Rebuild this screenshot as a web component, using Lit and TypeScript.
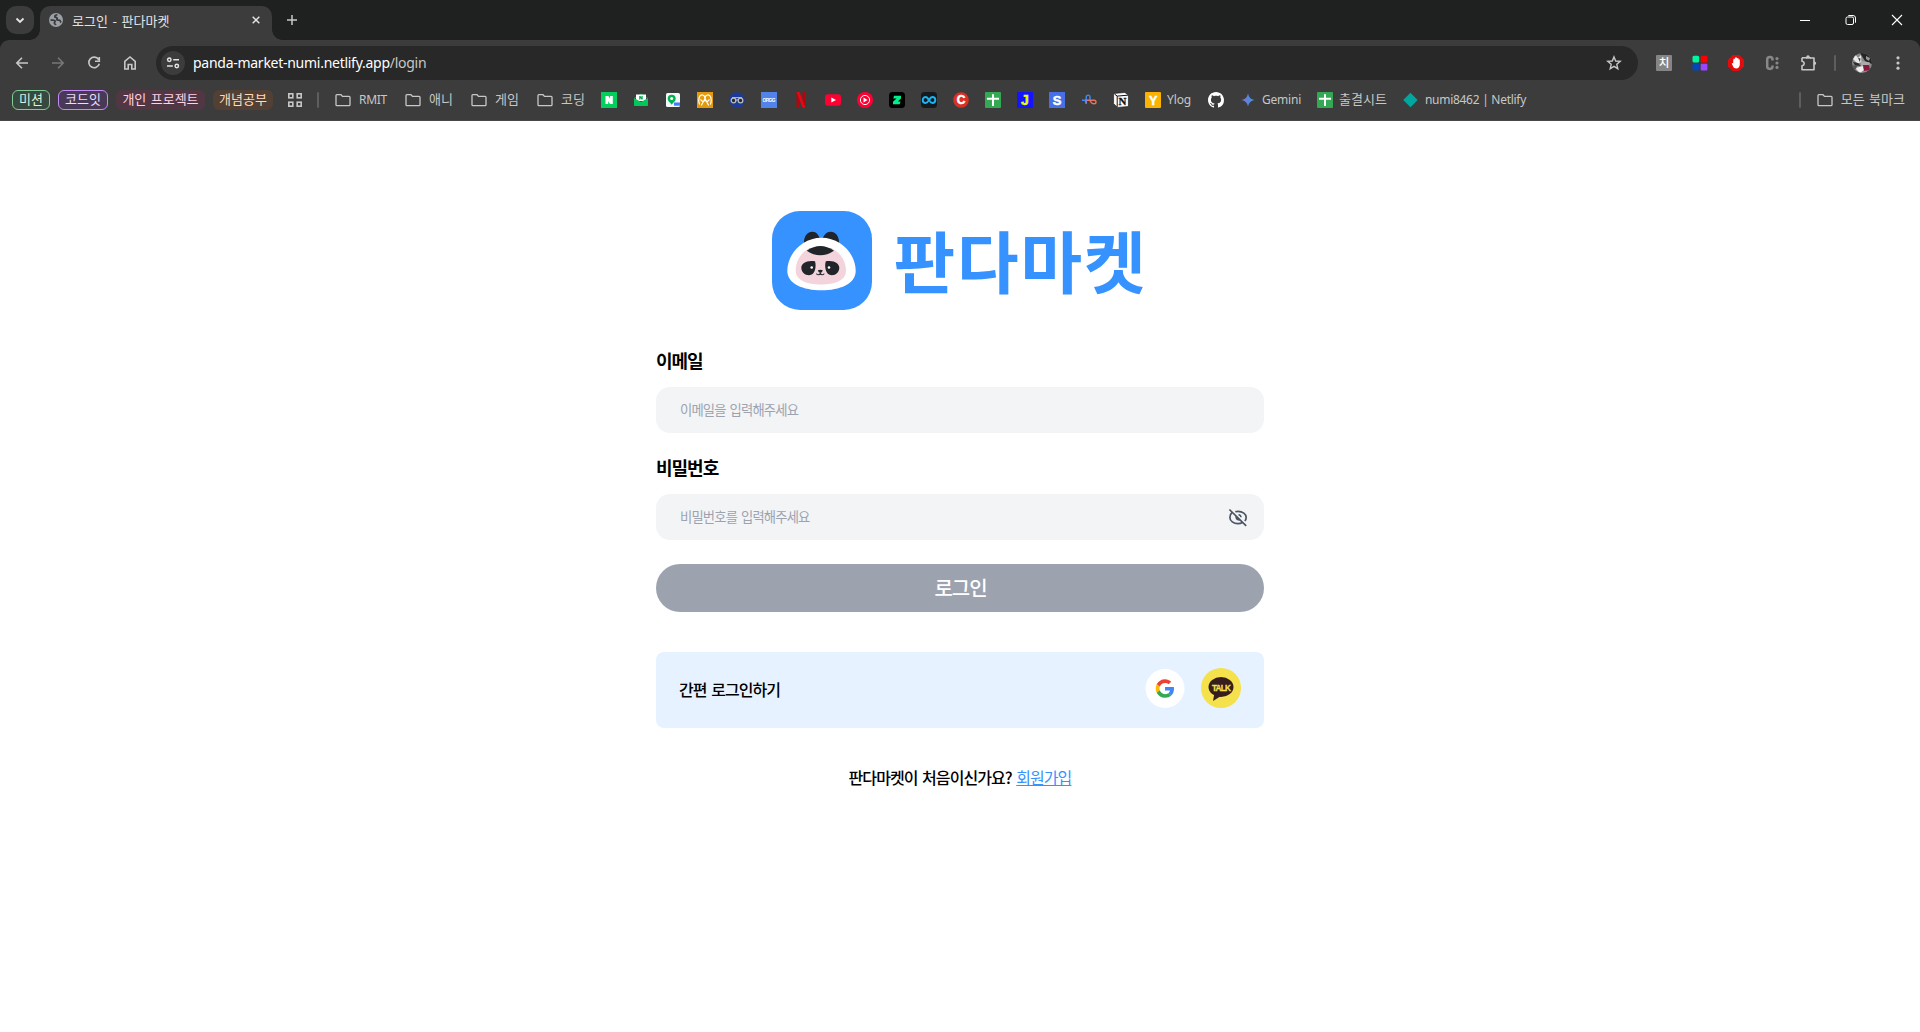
import { LitElement, html, css, svg, nothing } from "lit";
import { customElement, property } from "lit/decorators.js";
import { styleMap } from "lit/directives/style-map.js";

const icon = (size: number, body: unknown, box = "0 0 16 16") =>
  html`<svg width=${size} height=${size} viewBox=${box} fill="none" style="display:block">${body}</svg>`;

const glyph = (t: string, fill: string, size: number, y: number) =>
  svg`<text x="8" y=${y} text-anchor="middle" font-family="Liberation Sans, sans-serif" font-weight="700" font-size=${size} fill=${fill} stroke=${fill} stroke-width=".5">${t}</text>`;

const folder = svg`<path d="M1.9 2.7H6l1.5 1.7h6.6c.5 0 .9.4.9.9v7.4c0 .5-.4.9-.9.9H1.9c-.5 0-.9-.4-.9-.9V3.6c0-.5.4-.9.9-.9z" stroke="#c7c7c7" stroke-width="1.3"/>`;

const sheet = svg`<rect width="16" height="16" rx="1" fill="#34a853"/><path d="M7 2.3h2v3.500h5v2H9v6.200H7V7.800H2v-2h5z" fill="#fff"/>`;

interface Mark {
  art: unknown;
  label?: string;
  width: number;
  gap?: number;
  spacing?: string;
}

const marks: Mark[] = [
  { art: folder, label: "RMIT", width: 70, gap: 8, spacing: "-0.3px" },
  { art: folder, label: "애니", width: 66, gap: 8 },
  { art: folder, label: "게임", width: 66, gap: 8 },
  { art: folder, label: "코딩", width: 64, gap: 8 },
  { width: 32, art: svg`<rect width="16" height="16" fill="#03cf5d"/><path d="M4.500 4h2.900l1.700 2.700V4h2.700v8H9L7.200 9.200V12H4.500z" fill="#fff"/>` },
  { width: 32, art: svg`<path d="M1 6l7-4.500L15 6z" fill="#03a94d"/><path d="M3 2.500h10V9H3z" fill="#fff"/><path d="M6.200 4h1.300l1 1.500V4h1.200v3.500H8.400l-1-1.400v1.400H6.200z" fill="#03a94d"/><path d="M1 6l7 4 7-4v7.200c0 .5-.4.8-.8.8H1.800c-.4 0-.8-.3-.8-.8z" fill="#03c75a"/>` },
  { width: 32, art: svg`<rect x="1" y="1" width="14" height="14" rx="1.500" fill="#f4f6f8"/><path d="M9 10.500h6v3.200H9z" fill="#3d7dff"/><path d="M6.700 2.700a4 4 0 0 1 4 4c0 2.500-2.300 3.500-4 6-1.700-2.500-4-3.500-4-6a4 4 0 0 1 4-4z" fill="#03b350"/><circle cx="6.700" cy="6.500" r="1.500" fill="#fff"/>` },
  { width: 32, art: svg`<rect width="16" height="16" fill="#e39a0b"/><path d="M2.600 12.500C.500 7 2.500 2.600 5.500 3c2 .3 2.500 2 2.500 3.500C8 5 8.500 3.300 10.500 3c3-.4 5 4 2.900 9.500M4.300 13.500L8 6.500l3.700 7M3.500 7.500l2.700 2.600M12.500 7.500l-2.700 2.600M8 6.500v3" stroke="#fff" stroke-width="1.200"/>` },
  { width: 32, art: svg`<circle cx="8" cy="8" r="7.800" fill="#1d3a98"/><circle cx="4.500" cy="8.500" r="2.300" fill="#222831" stroke="#b9bcb9" stroke-width="1.300"/><circle cx="11.500" cy="8.500" r="2.300" fill="#222831" stroke="#b9bcb9" stroke-width="1.300"/><path d="M3 5.600h10M7 8h2" stroke="#b9bcb9"/>` },
  { width: 32, art: svg`<rect width="16" height="16" fill="#5383e8"/><text x="8" y="9.800" text-anchor="middle" textLength="13" font-family="Liberation Sans, sans-serif" font-weight="700" font-size="4.800" fill="#fff">OP.GG</text>` },
  { width: 32, art: svg`<path d="M3.500 0h3v16l-3 .200zM9.500 0h3v16l-3-.500z" fill="#b1060f"/><path d="M3.500 0h3l6 16-3-.400z" fill="#e50914"/>` },
  { width: 32, art: svg`<rect y="2.200" width="16" height="11.600" rx="3" fill="#ff0033"/><path d="M6.300 5.400L11 8l-4.700 2.600z" fill="#fff"/>` },
  { width: 32, art: svg`<circle cx="8" cy="8" r="8" fill="#ff0033"/><circle cx="8" cy="8" r="4.600" stroke="#fff" stroke-width="1"/><path d="M6.500 5.600L10.500 8l-4 2.400z" fill="#fff"/>` },
  { width: 32, art: svg`<rect width="16" height="16" rx="3.500" fill="#000"/><path d="M5 3.800h7v2.700L8.800 9.500h2.700l-.8 2.700H4V9.700l3.600-3.300H4.300z" fill="#00ee8c"/>` },
  { width: 32, art: svg`<rect width="16" height="16" rx="3.500" fill="#16191d"/><path d="M8 8C6.500 5.500 5.800 5 4.700 5a3 3 0 0 0 0 6C5.800 11 6.500 10.500 8 8s2.200-3 3.300-3a3 3 0 0 1 0 6C10.200 11 9.500 10.500 8 8z" stroke="#19b5f4" stroke-width="1.900"/>` },
  { width: 32, art: svg`<circle cx="8" cy="8" r="7.800" fill="#d93025"/>${glyph("C", "#fff", 12, 12.3)}` },
  { width: 32, art: sheet },
  { width: 32, art: svg`<rect width="16" height="16" fill="#1414ff"/>${glyph("J", "#e1ff00", 14, 13)}` },
  { width: 32, art: svg`<rect width="16" height="16" fill="#4770e8"/>${glyph("S", "#fff", 13, 12.600)}` },
  { width: 32, art: svg`<path d="M1 8.200h2.200c1.500 0 2 3 2 3.600V5a1.900 1.900 0 0 1 3.800 0v3.500" stroke="#3f8cf0" stroke-width="1.400"/><path d="M4.500 8.200h8.700a1.700 1.700 0 0 1 0 3.600c-3.200 0-3.200-1.500-4.200-3.600" stroke="#e8735a" stroke-width="1.400"/><path d="M5.200 11.800V7.500" stroke="#8a7fe0" stroke-width="1.400"/>` },
  { width: 32, art: svg`<path d="M.6 1.500L11.800.5 15.400 3v11.500l-11 .9L.6 11.500z" fill="#fff" stroke="#111" stroke-width=".6"/><path d="M1.500 2L4.200 4.100l10.700-.9M4.200 4.100v10.800" stroke="#111" stroke-width="1"/><text x="9.600" y="12.800" text-anchor="middle" font-family="Liberation Serif, serif" font-weight="700" font-size="11" fill="#111" stroke="#111" stroke-width=".3">N</text>` },
  { width: 63, label: "Ylog", spacing: "-0.1px", art: svg`<rect width="16" height="16" rx="1" fill="#f9b300"/>${glyph("Y", "#fff", 12.500, 12.500)}` },
  { width: 32, art: svg`<path fill="#fff" d="M8 0C3.580 0 0 3.580 0 8c0 3.540 2.290 6.530 5.470 7.590.4.070.55-.17.55-.38 0-.19-.01-.82-.01-1.490-2.010.37-2.530-.49-2.690-.94-.09-.23-.48-.94-.82-1.130-.28-.15-.68-.52-.01-.53.63-.01 1.080.58 1.230.82.720 1.210 1.870.87 2.330.66.070-.52.280-.87.510-1.070-1.780-.2-3.640-.89-3.640-3.950 0-.87.310-1.590.82-2.150-.08-.2-.36-1.020.08-2.120 0 0 .67-.21 2.200.82.640-.18 1.320-.27 2-.27s1.360.09 2 .27c1.530-1.040 2.200-.82 2.200-.82.440 1.100.160 1.920.080 2.120.510.56.820 1.270.820 2.150 0 3.070-1.870 3.750-3.650 3.950.290.250.540.730.540 1.480 0 1.070-.01 1.930-.01 2.200 0 .210.150.460.550.380A8.010 8.010 0 0 0 16 8c0-4.420-3.580-8-8-8z"/>` },
  { width: 77, label: "Gemini", spacing: "-0.2px", art: svg`<defs><linearGradient id="gem" x1="2" y1="8" x2="14" y2="8" gradientUnits="userSpaceOnUse"><stop stop-color="#8e72c4"/><stop offset=".45" stop-color="#5c83dd"/><stop offset="1" stop-color="#3f97ea"/></linearGradient></defs><path d="M8 1.500Q9 7 14.500 8 9 9 8 14.500 7 9 1.500 8 7 7 8 1.500z" fill="url(#gem)"/>` },
  { width: 86, label: "출결시트", art: sheet },
  { width: 123, label: "numi8462 | Netlify", spacing: "-0.28px", gap: 7, art: svg`<path d="M8 .3L15.700 8 8 15.700.3 8z" fill="#00a6a0"/>` },
];

@customElement("browser-bar")
class BrowserBar extends LitElement {
  static styles = css`
    :host { display: block; height: 121px; background: #1f2120; color: #c7c7c7; box-sizing: border-box;
      font: 12px/16px "Noto Sans", "Noto Sans CJK KR", sans-serif; }
    .strip { display: flex; height: 40px; align-items: flex-start; padding-left: 6px; box-sizing: border-box; }
    .search { display: grid; place-items: center; width: 28px; height: 28px; margin: 6px 6px 0 0; border-radius: 10px; background: #3c3c3c; }
    .tab { position: relative; display: flex; align-items: center; width: 232px; height: 34px; margin-top: 6px; padding: 0 9px 6px; box-sizing: border-box; background: #3c3c3c; border-radius: 10px 10px 0 0; }
    .tab::before, .tab::after { content: ""; position: absolute; bottom: 0; width: 10px; height: 10px; }
    .tab::before { left: -10px; background: radial-gradient(circle at 0 0, transparent 9.5px, #3c3c3c 10px); }
    .tab::after { right: -10px; background: radial-gradient(circle at 100% 0, transparent 9.5px, #3c3c3c 10px); }
    .title { flex: 1; margin-left: 9px; padding-top: 1px; color: #e3e3e3; font: 13px/16px "Noto Sans CJK KR", sans-serif; letter-spacing: 0.1px; word-spacing: 1.3px; }
    .plus { display: grid; place-items: center; width: 28px; height: 28px; margin: 6px 0 0 6px; }
    .window { display: flex; margin-left: auto; height: 40px; }
    .window > span { display: grid; place-items: center; width: 46px; }
    .tools { display: flex; align-items: center; height: 46px; padding: 0 4px; background: #3c3c3c; border-radius: 9px 9px 0 0; }
    .cell { display: grid; place-items: center; width: 36px; height: 34px; }
    .omni { display: flex; align-items: center; flex: 1; height: 34px; margin: 0 8px; border-radius: 17px; background: #282828; padding: 0 16px 0 5px; }
    .site { display: grid; place-items: center; width: 24px; height: 24px; border-radius: 50%; background: #3c3c3c; }
    .url { flex: 1; margin-left: 8px; font-size: 14px; line-height: 20px; letter-spacing: -0.27px; color: #fff; }
    .url span { color: #c7c7c7; }
    .sep { width: 2px; height: 16px; background: #5e5e5e; border-radius: 1px; }
    .tools .sep { margin: 0 8px; }
    .marks { display: flex; align-items: center; height: 35px; padding: 0 15px 6px 12px; background: #3c3c3c; border-bottom: 1px solid #474747; box-sizing: border-box; white-space: nowrap; }
    .chip { box-sizing: border-box; height: 20px; margin-right: 8px; border: 1px solid; border-radius: 6px; text-align: center; font: 13px/16px "Noto Sans CJK KR", sans-serif; word-spacing: 1.5px; }
    .green { width: 38px; background: #37493f; border-color: #81c995; color: #d9f2df; }
    .purple { width: 50px; background: #483a56; border-color: #c58af9; color: #eddcff; }
    .pink { width: 89px; background: #513744; border-color: #513744; color: #ffd3e6; }
    .orange { width: 60px; background: #524034; border-color: #524034; color: #ffdcc0; }
    .apps { margin: 0 15px 0 7px; }
    .mark { display: flex; align-items: center; flex: none; font-family: "Noto Sans", sans-serif; }
    .ko { padding-bottom: 2px; font: 13px/16px "Noto Sans CJK KR", sans-serif; word-spacing: 1.5px; }
    .list { display: flex; flex: 1; margin-left: 16px; }
    .all { display: flex; align-items: center; gap: 8px; margin-left: 16px; }
  `;

  render() {
    return html`
      <div class="strip">
        <div class="search">${icon(16, svg`<path d="M4.500 6.500L8 10l3.500-3.500" stroke="#e3e3e3" stroke-width="1.900"/>`)}</div>
        <div class="tab">
          ${icon(14, svg`<circle cx="8" cy="8" r="8" fill="#9aa0a6"/><path d="M9.700 2c-2 .3-3.500 1.300-3 2.400.4.900 2.200.5 2.600 1.400.3.900-.7 1.300-.3 2.100.5.900 2.600-.3 3.500.6.700.700.2 1.600 1.500 2.200M1.800 7.800c2 .5 5-.2 5.200 1.400.2 1.400-1.300 1.300-.8 2.600.3.700 1.300.8 1.400 2" stroke="#3c3c3c" stroke-width="2"/>`)}
          <span class="title">로그인 - 판다마켓</span>
          ${icon(14, svg`<path d="M4.200 4.200l7.600 7.600M11.800 4.200l-7.600 7.600" stroke="#e3e3e3" stroke-width="1.700"/>`)}
        </div>
        <div class="plus">${icon(16, svg`<path d="M8 3v10M3 8h10" stroke="#c7c7c7" stroke-width="1.500"/>`)}</div>
        <div class="window">
          <span>${icon(12, svg`<path d="M1 6.500h10" stroke="#fff"/>`, "0 0 12 12")}</span>
          <span>${icon(12, svg`<rect x="1" y="3" width="7.500" height="7.500" rx="1.500" stroke="#fff"/><path d="M3.300 1.500h4.700a2.500 2.500 0 0 1 2.500 2.500v4.700" stroke="#fff"/>`, "0 0 12 12")}</span>
          <span>${icon(12, svg`<path d="M1 1l10 10M11 1L1 11" stroke="#fff" stroke-width="1.100"/>`, "0 0 12 12")}</span>
        </div>
      </div>
      <div class="tools">
        <div class="cell">${icon(16, svg`<path d="M14 8H3M8 2.800L2.800 8 8 13.200" stroke="#c7c7c7" stroke-width="1.600"/>`)}</div>
        <div class="cell">${icon(16, svg`<path d="M2 8h11M8 2.800L13.200 8 8 13.200" stroke="#777" stroke-width="1.600"/>`)}</div>
        <div class="cell">${icon(16, svg`<path d="M12.600 4.500A5.300 5.300 0 1 0 13.300 8.800M13.300 2v4.300H9" stroke="#c7c7c7" stroke-width="1.600"/>`)}</div>
        <div class="cell">${icon(16, svg`<path d="M2.800 6.300L8 2l5.200 4.300V14H9.800V9.500H6.200V14H2.800z" stroke="#c7c7c7" stroke-width="1.600"/>`)}</div>
        <div class="omni">
          <span class="site">${icon(16, svg`<g stroke="#e3e3e3" stroke-width="1.500"><circle cx="4.300" cy="4.800" r="1.700"/><path d="M8.200 4.800H14M2 11h5.800"/><circle cx="11.800" cy="11" r="1.700"/></g>`)}</span>
          <span class="url">panda-market-numi.netlify.app<span>/login</span></span>
          ${icon(16, svg`<path d="M8 1.900l1.700 4.100 4.500.4-3.400 2.900 1 4.400L8 11.300l-3.800 2.400 1-4.400L1.800 6.400l4.500-.4z" stroke="#c7c7c7" stroke-width="1.400"/>`)}
        </div>
        <div class="cell">${icon(16, svg`<rect width="16" height="16" rx="1" fill="#858585"/><text x="8" y="12.200" text-anchor="middle" font-family="Noto Sans CJK KR, sans-serif" font-size="11.500" font-weight="500" fill="#fff">치</text>`)}</div>
        <div class="cell">${icon(16, svg`<rect x=".5" y=".8" width="6.700" height="6.700" rx="1.500" fill="#00f5a0"/><rect x="8.700" y=".8" width="6.700" height="6.700" rx="1" fill="#ff0000"/><rect x=".5" y="8.700" width="6.700" height="6.700" rx="1" fill="#0546b8"/><rect x="8.700" y="8.700" width="6.700" height="6.700" rx="1" fill="#9747ff"/>`)}</div>
        <div class="cell">${icon(16, svg`<path d="M4.700 0h6.600L16 4.700v6.600L11.300 16H4.700L0 11.300V4.700z" fill="#e30b0b"/><path d="M5.200 5.200h.3V3.800h1.500v-1.300H9v.8h1.500v1.200h1.300v5c0 2-1.300 4-3.500 4-1.700 0-2.700-1-3.300-2.300L3.700 8.500l.8-.6.7.7z" fill="#fff"/>`)}</div>
        <div class="cell">${icon(16, svg`<path d="M8.500 5.400V4.400c0-1.500-.9-2.300-2.500-2.300S3.200 2.900 3.200 4.400v7.200c0 1.500 1.200 2.300 2.800 2.300s2.500-.8 2.500-2.300v-1" stroke="#888" stroke-width="2.500"/><g fill="#888"><circle cx="13" cy="3.600" r="1.600"/><circle cx="13" cy="8" r="1.600"/><circle cx="13" cy="12.400" r="1.600"/></g>`)}</div>
        <div class="cell">${icon(18, svg`<path d="M3 3.800h5M3 3.800v3.500c3 .7 3 3.900 0 4.600v3.900h12V4h-4" stroke="#c7c7c7" stroke-width="1.600" stroke-linejoin="round"/><path d="M7.200 4.200V3a1.800 1.800 0 0 1 3.600 0v1.200zM14.800 7.500h.6a1.700 1.700 0 0 1 0 3.500h-.6z" fill="#c7c7c7"/><path d="M7 3.800h5" stroke="#c7c7c7" stroke-width="1.600"/>`, "0 0 18 18")}</div>
        <i class="sep"></i>
        <div class="cell">${icon(20, svg`<clipPath id="av"><circle cx="10" cy="10" r="10"/></clipPath><g clip-path="url(#av)"><path d="M0 0h20v20H0z" fill="#8a8989"/><path d="M8 0h12v11L13 8z" fill="#252323"/><path d="M3 1l3 4 3-3 .500 7-4 1.500L1 6z" fill="#e8e8e8"/><path d="M6 5l2.500.5L8 9zM1 9l5 1 3 3-6-.5z" fill="#302c2d"/><path d="M9 8l9 1.500-1 2.500-8 1z" fill="#aaa"/><path d="M14 3l4 2-1 3-3-2z" fill="#999"/><path d="M3 15l8-2 1 4-4 3z" fill="#eee"/><path d="M0 12l5 1-1 3-3 1z" fill="#555"/><path d="M11 12h6l1 5-6 1z" fill="#8b183a"/></g>`, "0 0 20 20")}</div>
        <div class="cell">${icon(16, svg`<g fill="#c7c7c7"><circle cx="8" cy="2.800" r="1.600"/><circle cx="8" cy="8" r="1.600"/><circle cx="8" cy="13.200" r="1.600"/></g>`)}</div>
      </div>
      <div class="marks">
        <span class="chip green">미션</span>
        <span class="chip purple">코드잇</span>
        <span class="chip pink">개인 프로젝트</span>
        <span class="chip orange">개념공부</span>
        <span class="apps">${icon(14, svg`<g stroke="#c7c7c7" stroke-width="1.600"><rect x=".8" y=".8" width="4" height="4"/><rect x="9.200" y=".8" width="4" height="4"/><rect x=".8" y="9.200" width="4" height="4"/><rect x="9.200" y="9.200" width="4" height="4"/></g>`, "0 0 14 14")}</span>
        <i class="sep"></i>
        <div class="list">
          ${marks.map(
            (m) => html`<div class="mark" style=${styleMap({ width: `${m.width}px`, gap: `${m.gap ?? 6}px`, letterSpacing: m.spacing ?? "normal" })}>
              ${icon(16, m.art)}${m.label ? html`<span class=${/[가-힣]/.test(m.label) ? "ko" : ""}>${m.label}</span>` : nothing}
            </div>`,
          )}
        </div>
        <i class="sep"></i>
        <span class="all">${icon(16, folder)}<span class="ko">모든 북마크</span></span>
      </div>
    `;
  }
}

@customElement("form-field")
class FormField extends LitElement {
  @property() label = "";
  @property() hint = "";
  @property({ type: Boolean }) secret = false;

  static styles = css`
    :host { display: block; margin-bottom: 24px; font-family: "Noto Sans CJK KR", sans-serif; }
    label { display: block; height: 21px; margin-bottom: 16px; font-size: 18px; line-height: 21px; font-weight: 700; letter-spacing: -1px; }
    .box { display: flex; align-items: center; height: 46px; padding: 0 14px 0 24px; box-sizing: border-box; border-radius: 14px; background: #f3f4f6; }
    input { flex: 1; min-width: 0; height: 46px; padding: 0 0 2px; box-sizing: border-box; border: 0; outline: 0; background: transparent; font: 13.333px/16px "Noto Sans CJK KR", sans-serif; letter-spacing: -0.85px; word-spacing: 1.800px; }
    input::placeholder { color: #9ca3af; opacity: 1; }
  `;

  render() {
    return html`
      <label>${this.label}</label>
      <div class="box">
        <input type=${this.secret ? "password" : "email"} placeholder=${this.hint} />
        ${this.secret
          ? icon(24, svg`<g stroke="#4b5563" stroke-width="1.700"><path d="M3.400 4.500L20.200 20.800"/><path d="M6.100 7.500C4.500 8.800 3.900 10.700 3.900 12.500c0 3.500 3.700 6.200 8.100 6.200 1.600 0 3.200-.4 4.400-1.100M9.300 6.800c.8-.3 1.800-.4 2.700-.4 4.600 0 8.200 2.700 8.200 6.100 0 1.300-.5 2.500-1.400 3.500"/></g><path d="M9.600 10.200l5.200 5c-2.300 1.300-6.500-.3-5.200-5z" fill="#4b5563"/><path d="M12.500 9.700c1.500.2 2.400 1.200 2.500 2.600" stroke="#4b5563" stroke-width="1.500"/>`, "0 0 24 24")
          : nothing}
      </div>
    `;
  }
}

@customElement("app-root")
class AppRoot extends LitElement {
  static styles = css`
    :host { display: block; height: 1032px; overflow: hidden; background: #fff; color: #000; font-family: "Noto Sans CJK KR", sans-serif; }
    main { display: flex; flex-direction: column; width: 608px; margin: 0 auto; padding-top: 90px; }
    .logo { display: flex; align-items: center; gap: 22px; height: 100px; margin: 0 0 39px 115.500px; }
    h1 { margin: 0; padding-bottom: 5px; color: #3692ff; font-size: 67px; line-height: 95px; font-weight: 700; letter-spacing: 1.900px; white-space: nowrap; }
    .login { height: 48px; border: 0; border-radius: 24px; background: #9ca3af; color: #fff; font: 500 20px/48px "Noto Sans CJK KR", sans-serif; letter-spacing: -1px; padding: 0 0 0 1px; }
    .social { display: flex; align-items: center; gap: 16px; height: 76px; margin-top: 40px; padding: 0 23px 4px; box-sizing: border-box; border-radius: 8px; background: #e6f2ff; font-size: 16px; font-weight: 500; letter-spacing: -0.95px; word-spacing: 2px; }
    .social span { flex: 1; padding-top: 1px; }
    .join { margin: 37px 0 0; text-align: center; font-size: 16px; line-height: 24px; font-weight: 500; letter-spacing: -0.95px; word-spacing: 2px; }
    .join a { color: #3692ff; font-weight: 400; text-decoration: underline; }
  `;

  render() {
    return html`
      <browser-bar></browser-bar>
      <main>
        <div class="logo">
          ${icon(100, svg`<rect width="100" height="99" rx="28" fill="#3692ff"/>
            <path d="M32 32c-.5-7 4-11.500 8.500-11.300 4 .2 6 3 7 6.300zM67 32c.5-7-4-11.500-8.500-11.300-4 .2-6.500 3-7.500 6.300z" fill="#212529"/>
            <path d="M49.500 26.700C69 26.700 83.700 43 83.700 60c0 13-16 19.300-34.200 19.300S15.300 73 15.300 60c0-17 14.700-33.300 34.200-33.300z" fill="#fff"/>
            <path d="M37 37.500h23C69 42 74 51 74 59.500 74 69.500 63 73.500 49 73.500S23.700 69.500 23.700 59.500C23.700 51 28 42 37 37.500z" fill="#f3d4dc"/>
            <path d="M34.700 39.700Q48.300 30.500 62 39.700 48.300 48.900 34.700 39.700z" fill="#212529"/>
            <path d="M43 50.300c1.500 4.500.5 14-6 14-4.300 0-7.700-3.500-7.700-7.500 0-4.700 5.700-8 13.700-6.500zM53.800 50.300c-1.500 4.500-.5 14 6 14 4.300 0 7.500-3.500 7.500-7.500 0-4.700-5.500-8-13.500-6.500z" fill="#212529"/>
            <circle cx="39.700" cy="56.500" r="1.300" fill="#fff"/><circle cx="57" cy="56.500" r="1.300" fill="#fff"/>
            <path d="M45.800 59.300q2.500-1 5 0-.6 2.500-2.500 2.500t-2.500-2.500z" fill="#212529"/><path d="M44.500 62.500c.3 1.800 3 1.800 3.800-.3.800 2.100 3.500 2.100 3.800.3" stroke="#212529" stroke-width="1.100"/>`, "0 0 100 100")}
          <h1>판다마켓</h1>
        </div>
        <form-field label="이메일" hint="이메일을 입력해주세요"></form-field>
        <form-field label="비밀번호" hint="비밀번호를 입력해주세요" secret></form-field>
        <button class="login">로그인</button>
        <div class="social">
          <span>간편 로그인하기</span>
          ${icon(40, svg`<circle cx="20" cy="20.500" r="19.500" fill="#fff"/><g transform="translate(10.700 11.200) scale(.389)"><path fill="#ea4335" d="M24 9.500c3.540 0 6.710 1.220 9.210 3.600l6.850-6.850C35.900 2.380 30.470 0 24 0 14.620 0 6.510 5.380 2.560 13.220l7.980 6.190C12.430 13.720 17.740 9.500 24 9.500z"/><path fill="#4285f4" d="M46.980 24.550c0-1.570-.15-3.090-.38-4.550H24v9.020h12.940c-.58 2.960-2.260 5.480-4.780 7.180l7.730 6c4.510-4.180 7.090-10.360 7.090-17.650z"/><path fill="#fbbc05" d="M10.530 28.590c-.48-1.450-.76-2.990-.76-4.590s.27-3.140.76-4.590l-7.980-6.190C.92 16.460 0 20.120 0 24c0 3.880.92 7.540 2.560 10.780l7.970-6.190z"/><path fill="#34a853" d="M24 48c6.480 0 11.930-2.130 15.890-5.810l-7.730-6c-2.150 1.450-4.920 2.300-8.160 2.300-6.260 0-11.570-4.220-13.470-9.910l-7.980 6.190C6.510 42.620 14.620 48 24 48z"/></g>`, "0 0 40 40")}
          ${icon(40, svg`<circle cx="20" cy="20" r="20" fill="#f5e14b"/><ellipse cx="20" cy="19" rx="12.500" ry="10" fill="#371d1e"/><path d="M13.500 25l-1.500 8 8-5z" fill="#371d1e"/><text x="20" y="22.700" text-anchor="middle" textLength="18" lengthAdjust="spacingAndGlyphs" font-family="Liberation Sans, sans-serif" font-size="9.500" font-weight="700" fill="#f5e14b" stroke="#f5e14b" stroke-width=".3">TALK</text>`, "0 0 40 40")}
        </div>
        <p class="join">판다마켓이 처음이신가요? <a>회원가입</a></p>
      </main>
    `;
  }
}
